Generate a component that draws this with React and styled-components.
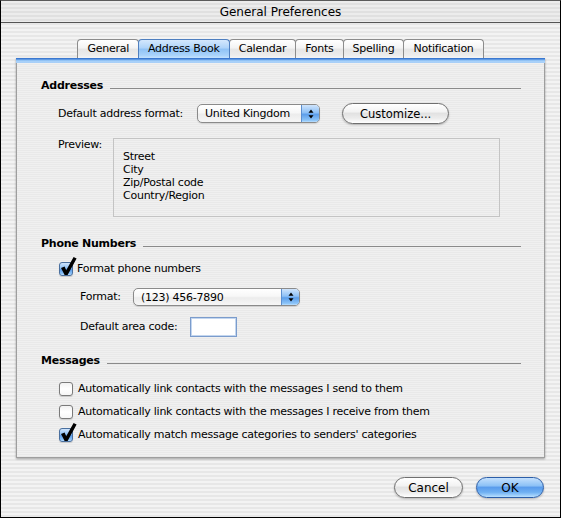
import React from 'react'
import styled, { createGlobalStyle } from 'styled-components'

const GlobalStyle = createGlobalStyle`
  html, body { margin: 0; padding: 0; background: #fff; }
  body {
    font-family: "Lucida Grande", "DejaVu Sans", sans-serif;
    font-size: 11px;
    letter-spacing: -0.25px;
    color: #000;
  }
`

const stripes = (a, b, h) =>
  `repeating-linear-gradient(180deg, ${a} 0px, ${a} ${h}px, ${b} ${h}px, ${b} ${h * 2}px)`

const Window = styled.div`
  width: 561px;
  height: 518px;
  box-sizing: border-box;
  border: 1px solid #000;
  border-top-color: #5a5a5a;
  display: flex;
  flex-direction: column;
  background: ${stripes('#f3f3f3', '#e7e7e7', 2)};
`

const TitleBar = styled.div`
  height: 21px;
  border-bottom: 1px solid #555;
  display: flex;
  align-items: center;
  justify-content: center;
  font-size: 12px;
  letter-spacing: 0;
  background: ${stripes('#ececec', '#e0e0e0', 2)};
`

const Body = styled.div`
  flex: 1;
  display: flex;
  flex-direction: column;
  padding: 16px 15px 0;
`

const TabRow = styled.div`
  height: 19px;
  display: flex;
  justify-content: center;
`

const Tab = styled.div`
  height: 19px;
  box-sizing: border-box;
  padding: 0 9px;
  margin-left: -1px;
  line-height: 18px;
  border: 1px solid ${p => (p.$active ? '#4f7fbf' : '#8c8c8c')};
  border-bottom: 0;
  border-radius: 4px 4px 0 0;
  position: relative;
  z-index: ${p => (p.$active ? 2 : 1)};
  background: ${p =>
    p.$active
      ? 'linear-gradient(180deg, #d4e8fd 0%, #aed3f9 45%, #8fc2f5 50%, #a9d3fb 85%, #c4e2fd 100%)'
      : 'linear-gradient(180deg, #ffffff 0%, #f3f3f3 45%, #e6e6e6 50%, #ececec 85%, #f5f5f5 100%)'};
  &:first-child { margin-left: 0; }
`

const Panel = styled.div`
  height: 400px;
  display: flex;
  flex-direction: column;
  box-shadow: 0 1px 2px rgba(0, 0, 0, 0.35);
`

const PanelBar = styled.div`
  height: 5px;
  background: linear-gradient(180deg, #3a78d0 0px, #3a78d0 1px, #86bbf3 2px, #b5d8fb 4px, #9cc7f5 5px);
`

const PanelBody = styled.div`
  flex: 1;
  border: 1px solid #9e9e9e;
  border-top: 0;
  padding: 16px 23px 0 24px;
  display: flex;
  flex-direction: column;
  background: ${stripes('#f0f0f0', '#e9e9e9', 1)};
`

const Heading = styled.div`
  display: flex;
  height: 14px;
  line-height: 14px;
  font-weight: bold;
  margin-top: ${p => p.$top}px;
  &::after {
    content: '';
    flex: 1;
    height: 1px;
    margin: 9px 0 0 7px;
    background: #8a8a8a;
  }
`

const Row = styled.div`
  display: flex;
  align-items: ${p => p.$align || 'center'};
  gap: ${p => p.$gap || 0}px;
  margin-top: ${p => p.$top}px;
  margin-left: ${p => p.$indent}px;
  height: ${p => (p.$h ? `${p.$h}px` : 'auto')};
`

const Label = styled.span`
  line-height: 14px;
  white-space: nowrap;
  width: ${p => (p.$w ? `${p.$w}px` : 'auto')};
`

const PopupBox = styled.div`
  width: ${p => p.$w}px;
  height: ${p => p.$h}px;
  box-sizing: border-box;
  border: 1px solid #8a8a8a;
  border-radius: 5px;
  display: flex;
  overflow: hidden;
  box-shadow: 0 1px 1px rgba(0, 0, 0, 0.12);
  background: linear-gradient(180deg, #ffffff 0%, #f7f7f7 45%, #ececec 55%, #f6f6f6 100%);
`

const PopupText = styled.span`
  flex: 1;
  padding-left: 7px;
  display: flex;
  align-items: center;
`

const PopupArrows = styled.span`
  width: 17px;
  border-left: 1px solid #5c8fd0;
  display: flex;
  align-items: center;
  justify-content: center;
  background: linear-gradient(180deg, #cfe4fc 0%, #8dc0f6 45%, #5d9eea 55%, #8cc4f8 90%, #bde0ff 100%);
`

const PreviewBox = styled.div`
  width: 387px;
  height: 79px;
  box-sizing: border-box;
  border: 1px solid #c4c4c4;
  padding: 11px 0 0 9px;
  line-height: 13px;
`

const AquaButton = styled.div`
  width: ${p => p.$w}px;
  height: 21px;
  box-sizing: border-box;
  border-radius: 11px;
  display: flex;
  align-items: center;
  justify-content: center;
  font-size: ${p => p.$size || 12}px;
  letter-spacing: 0;
  border: 1px solid ${p => (p.$primary ? '#2c5ea8' : '#6f6f6f')};
  box-shadow: 0 1px 2px rgba(0, 0, 0, 0.25);
  background: ${p =>
    p.$primary
      ? 'linear-gradient(180deg, #c4e0fd 0%, #8ec2f6 40%, #5a9cec 50%, #6fb0f2 75%, #b8e0ff 100%)'
      : 'linear-gradient(180deg, #ffffff 0%, #f3f3f3 40%, #e2e2e2 50%, #ececec 75%, #ffffff 100%)'};
`

const Footer = styled.div`
  display: flex;
  justify-content: flex-end;
  gap: 13px;
  margin-top: 19px;
  padding-right: 1px;
`

const CheckWrap = styled.span`
  position: relative;
  width: 14px;
  height: 14px;
  box-sizing: border-box;
  border: 1px solid ${p => (p.$checked ? '#4a6f9e' : '#7a7a7a')};
  border-radius: 3px;
  flex-shrink: 0;
  box-shadow: 0 1px 1px rgba(0, 0, 0, 0.15);
  background: ${p =>
    p.$checked
      ? 'linear-gradient(180deg, #cfe4fc 0%, #8cc0f6 45%, #5c9ce9 55%, #8dc4f8 90%, #c0e0ff 100%)'
      : 'linear-gradient(180deg, #f2f2f2 0%, #ffffff 50%, #f6f6f6 100%)'};
  svg { position: absolute; left: 0; top: -7px; overflow: visible; }
`

const TextField = styled.div`
  width: 47px;
  height: 20px;
  box-sizing: border-box;
  border: 1px solid #7b9ccc;
  background: #fff;
  box-shadow: inset 0 0 0 1px #c3d6ef;
`

function Checkbox({ checked }) {
  return (
    <CheckWrap $checked={checked}>
      {checked && (
        <svg width="18" height="20" viewBox="0 0 18 20">
          <polygon points="1,12 4.6,10.4 6.2,14.2 13.6,1 16.6,2.4 7.6,19 4.6,19" fill="#000" />
        </svg>
      )}
    </CheckWrap>
  )
}

function Popup({ value, w, h }) {
  return (
    <PopupBox $w={w} $h={h}>
      <PopupText>{value}</PopupText>
      <PopupArrows>
        <svg width="6" height="10" viewBox="0 0 6 10">
          <polygon points="3,0.5 5.5,3.8 0.5,3.8" fill="#000" />
          <polygon points="0.5,6.2 5.5,6.2 3,9.5" fill="#000" />
        </svg>
      </PopupArrows>
    </PopupBox>
  )
}

const tabs = ['General', 'Address Book', 'Calendar', 'Fonts', 'Spelling', 'Notification']
const previewLines = ['Street', 'City', 'Zip/Postal code', 'Country/Region']
const messageOptions = [
  { text: 'Automatically link contacts with the messages I send to them', checked: false, top: 14 },
  { text: 'Automatically link contacts with the messages I receive from them', checked: false, top: 9 },
  { text: "Automatically match message categories to senders' categories", checked: true, top: 9 },
]

export default function App() {
  return (
    <>
      <GlobalStyle />
      <Window>
        <TitleBar>General Preferences</TitleBar>
        <Body>
          <TabRow>
            {tabs.map(t => (
              <Tab key={t} $active={t === 'Address Book'}>{t}</Tab>
            ))}
          </TabRow>
          <Panel>
            <PanelBar />
            <PanelBody>
              <Heading $top={0}>Addresses</Heading>
              <Row $top={10} $indent={17} $h={21}>
                <Label>Default address format:</Label>
                <Row $indent={14} $top={0}>
                  <Popup value="United Kingdom" w={123} h={19} />
                </Row>
                <Row $indent={22} $top={0}>
                  <AquaButton $w={107} $size={11.5}>Customize...</AquaButton>
                </Row>
              </Row>
              <Row $top={14} $indent={17} $align="flex-start">
                <Label $w={55}>Preview:</Label>
                <PreviewBox>
                  {previewLines.map(l => <div key={l}>{l}</div>)}
                </PreviewBox>
              </Row>

              <Heading $top={20}>Phone Numbers</Heading>
              <Row $top={11} $indent={18} $gap={4} $h={14}>
                <Checkbox checked />
                <Label>Format phone numbers</Label>
              </Row>
              <Row $top={12} $indent={39} $h={18}>
                <Label $w={53}>Format:</Label>
                <Popup value="(123) 456-7890" w={167} h={18} />
              </Row>
              <Row $top={11} $indent={39} $gap={13} $h={20}>
                <Label>Default area code:</Label>
                <TextField />
              </Row>

              <Heading $top={17}>Messages</Heading>
              {messageOptions.map(o => (
                <Row key={o.text} $top={o.top} $indent={18} $gap={5} $h={14}>
                  <Checkbox checked={o.checked} />
                  <Label>{o.text}</Label>
                </Row>
              ))}
            </PanelBody>
          </Panel>
          <Footer>
            <AquaButton $w={69}>Cancel</AquaButton>
            <AquaButton $w={68} $primary>OK</AquaButton>
          </Footer>
        </Body>
      </Window>
    </>
  )
}
